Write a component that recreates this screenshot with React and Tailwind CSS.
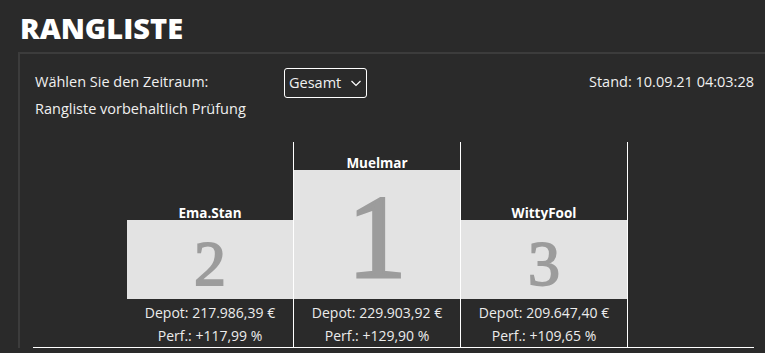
import React from "react";

const body = { fontFamily: "'Open Sans', 'Noto Sans', sans-serif" };

function Column({ name, rank, depot, perf, big, className }) {
  return (
    <div className={"flex flex-col " + className}>
      <div className="flex-1" />
      <div className="flex h-[18px] justify-center pt-[4px] text-[13.5px] font-bold leading-[14px] text-white">{name}</div>
      <div
        className={
          "flex items-center justify-center bg-[#e3e3e3] leading-none text-[#9c9c9c] [font-family:'Liberation_Serif','DejaVu_Serif',serif] " +
          (big
            ? "h-[129px] text-[118px] [-webkit-text-stroke:3px_#9c9c9c]"
            : "h-[79px] text-[64px] [-webkit-text-stroke:1.8px_#9c9c9c]")
        }
      >
        <span className={big ? "mt-[6px]" : "mt-[8px]"}>{rank}</span>
      </div>
      <div className="flex h-[24px] items-end justify-center text-[14px] text-[#ececec]">{depot}</div>
      <div className="flex h-[24px] items-center justify-center text-[14px] text-[#ececec]">{perf}</div>
    </div>
  );
}

export default function App() {
  return (
    <div className="h-[353px] w-[765px] overflow-hidden bg-[#2a2a2a]" style={body}>
      <div className="pl-[20px] pt-[12px]">
        <h1 className="text-[29px] font-extrabold leading-[32px] text-white">RANGLISTE</h1>
      </div>
      <div className="ml-[18px] mt-[8px] border-l-2 border-t-2 border-[#3c3c3c] pl-[13px] pr-[11px]">
        <div className="relative h-[88px] text-[14.5px] leading-[20px] text-[#f0f0f0]">
          <div className="absolute left-[2px] top-[18px]">Wählen Sie den Zeitraum:</div>
          <div className="absolute left-[2px] top-[45px]">Rangliste vorbehaltlich Prüfung</div>
          <div className="absolute left-[251px] top-[14px] flex h-[30px] w-[83px] items-center justify-between rounded-[3px] border border-white pl-[4px] pr-[4px]">
            <span>Gesamt</span>
            <svg width="12" height="8" viewBox="0 0 12 8" fill="none" stroke="#fff" strokeWidth="1.2">
              <path d="M1.5 2l4.5 4.5 4.5-4.5" />
            </svg>
          </div>
          <div className="absolute right-0 top-[18px]">Stand: 10.09.21 04:03:28</div>
        </div>
        <div className="flex h-[206px] border-b border-white pl-[94px]">
          <Column name="Ema.Stan" rank="2" depot="Depot: 217.986,39 €" perf="Perf.: +117,99 %" className="w-[166px]" />
          <Column name="Muelmar" rank="1" depot="Depot: 229.903,92 €" perf="Perf.: +129,90 %" big className="w-[168px] border-l border-r border-white" />
          <Column name="WittyFool" rank="3" depot="Depot: 209.647,40 €" perf="Perf.: +109,65 %" className="w-[167px] border-r border-white" />
        </div>
      </div>
    </div>
  );
}
